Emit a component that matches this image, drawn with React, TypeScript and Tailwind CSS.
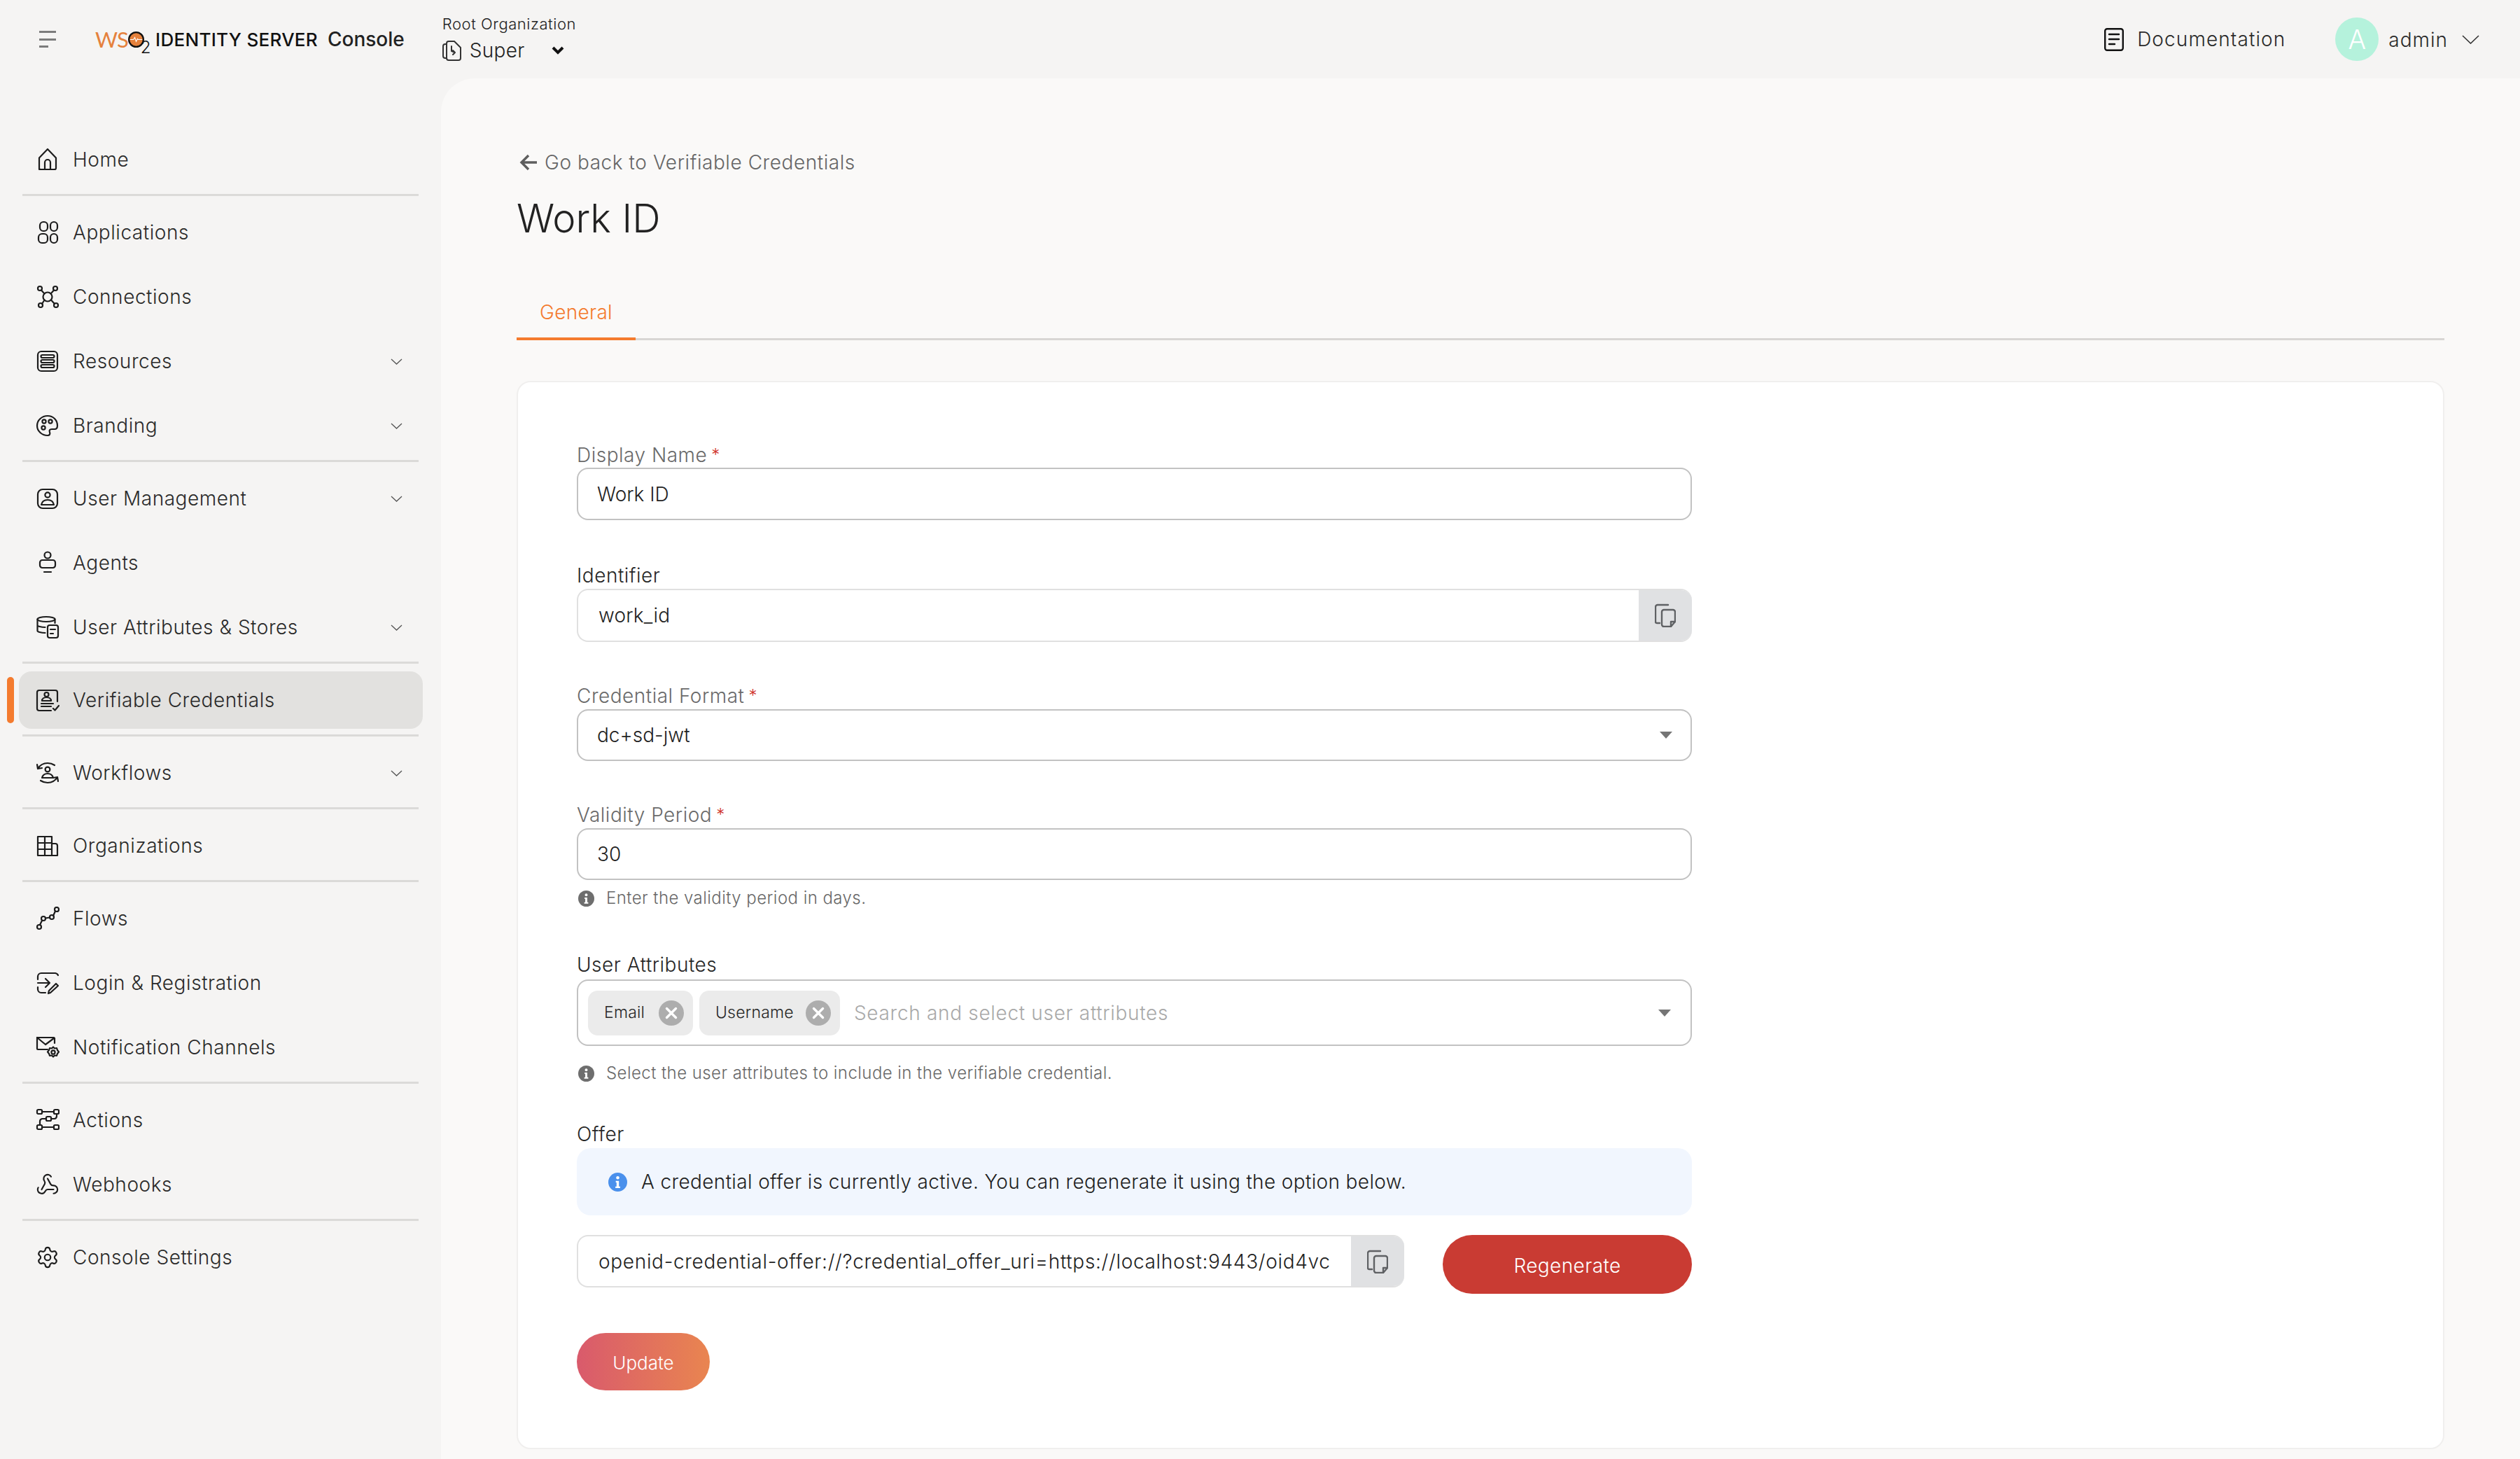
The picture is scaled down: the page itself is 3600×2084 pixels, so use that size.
import React from "react";
import { Webhook, Settings } from "lucide-react";

const S = "#1c1c1c";
type P = { children: React.ReactNode };
const Ic = ({ children }: P) => (
  <svg width="34" height="34" viewBox="0 0 34 34" fill="none" stroke={S} strokeWidth="2.2" strokeLinecap="round" strokeLinejoin="round" className="shrink-0">
    {children}
  </svg>
);
const Home = () => (
  <Ic>
    <path d="M5 31V14.5L17 2l12 12.5V29a2 2 0 0 1-2 2H7a2 2 0 0 1-2-2z" />
    <path d="M13 31V21a4 4 0 0 1 8 0v10" />
  </Ic>
);
const Apps = () => (
  <Ic>
    <rect x="6" y="2" width="11" height="13" rx="5" />
    <rect x="21" y="2" width="10" height="13" rx="5" />
    <rect x="4" y="19" width="13" height="13" rx="5" />
    <rect x="21" y="19" width="10" height="13" rx="5" />
  </Ic>
);
const Conn = () => (
  <Ic>
    <circle cx="6" cy="5" r="3" />
    <circle cx="28" cy="5" r="3" />
    <circle cx="7" cy="29" r="3" />
    <circle cx="29" cy="29" r="3" />
    <circle cx="17" cy="17" r="6.5" />
    <path d="M8 7.5l4.5 5M26 7.5l-4.5 5M9 27l3.5-5.5M27 27l-5-5.5" />
  </Ic>
);
const Res = () => (
  <Ic>
    <rect x="3" y="3" width="28" height="28" rx="5" />
    <rect x="7.5" y="8" width="19" height="4" rx="2" />
    <rect x="7.5" y="15" width="19" height="4" rx="2" />
    <rect x="7.5" y="22" width="19" height="4" rx="2" />
  </Ic>
);
const Brand = () => (
  <Ic>
    <path d="M31 17c0-8-6-14-14-14S2 9 2 17s7 14 15 14c3 0 4-2 3-4.5-1-3 0-4.5 3-4.5h4c3 0 4-2 4-5z" />
    <circle cx="12" cy="11" r="2.6" />
    <circle cx="21" cy="11" r="2.6" />
    <circle cx="11" cy="20" r="2.6" />
  </Ic>
);
const User = () => (
  <Ic>
    <rect x="3" y="4" width="28" height="27" rx="7" />
    <circle cx="17" cy="12" r="3.6" />
    <path d="M8 26c1-5 5-7 9-7s8 2 9 7z" />
  </Ic>
);
const Agent = () => (
  <Ic>
    <circle cx="17" cy="6" r="4.5" />
    <rect x="6" y="13" width="22" height="11" rx="3.5" />
    <path d="M12 30h10" />
  </Ic>
);
const Stores = () => (
  <Ic>
    <ellipse cx="15" cy="5.5" rx="12.5" ry="3.5" />
    <path d="M2.5 5.5V22c0 1.5 5 3 11 3M2.5 14c0 1.5 5 3 11 3M27.5 5.5V11" />
    <rect x="17" y="14" width="15" height="18" rx="3" />
    <path d="M21 20h7M21 26h4" />
  </Ic>
);
const Vc = () => (
  <Ic>
    <path d="M31 19V6a3 3 0 0 0-3-3H5a3 3 0 0 0-3 3v23a3 3 0 0 0 3 3h17" />
    <circle cx="15.5" cy="9" r="3" />
    <path d="M9 18c0-3 3-5 6.500-5s6.500 2 6.500 5zM8 22h17M8 26h14" />
    <path d="M25 29l2.500 2.500L33 25" />
  </Ic>
);
const Wf = () => (
  <Ic>
    <circle cx="17" cy="12" r="3.400" />
    <path d="M9 24c1-4 4-6 8-6s7 2 8 6z" />
    <path d="M3 11c3-5 8-8 14-8 4 0 7 1 10 3M2 5l1 6 6-1M31 23c-3 5-8 8-14 8-4 0-7-1-10-3M32 29l-1-6-6 1" />
  </Ic>
);
const Org = () => (
  <Ic>
    <path d="M3 4h20v27H3zM3 13h20M3 22h20M13 4v27M23 14h5a3 3 0 0 1 3 3v14H23" />
  </Ic>
);
const Flows = () => (
  <Ic>
    <circle cx="5" cy="29" r="3" />
    <circle cx="11" cy="17" r="3" />
    <circle cx="23" cy="15" r="3" />
    <circle cx="30" cy="4" r="3" />
    <path d="M6 26l3-6M14 16.500l6-1M25 13l3-6.500" />
  </Ic>
);
const Login = () => (
  <Ic>
    <path d="M3 12V8a5 5 0 0 1 5-5h20a5 5 0 0 1 4 3M3 23v3a5 5 0 0 0 5 5h6" />
    <path d="M3 17h17M14 11l6 6-6 6" />
    <path d="M21 31l-3 1 1-4 10-10 3 3z" />
  </Ic>
);
const Notif = () => (
  <Ic>
    <path d="M17 20H3a1 1 0 0 1-1-1V3h24l1 1v7" />
    <path d="M2 3l12 10L26 4" />
    <circle cx="25" cy="24" r="2.600" />
    <path d="M25 16.500l2 2 3-.500 1 3 2 2.500-2 2.500-1 3-3-.500-2 2-2-2-3 .500-1-3-2-2.500 2-2.500 1-3 3 .500z" />
  </Ic>
);
const Act = () => (
  <Ic>
    <rect x="2" y="2" width="7" height="6" rx="1.500" />
    <rect x="26" y="2" width="7" height="6" rx="1.500" />
    <rect x="15" y="12" width="7" height="6" rx="1.500" />
    <rect x="2" y="24" width="7" height="6" rx="1.500" />
    <rect x="26" y="24" width="7" height="6" rx="1.500" />
    <path d="M9 5h17M9 27h17M22 15h5a4 4 0 0 0 3-4V8M15 15h-6a4 4 0 0 0-3 4v5" />
  </Ic>
);
const Hook = () => <Webhook size={34} strokeWidth={1.5} color={S} className="shrink-0" />;
const Gear = () => <Settings size={34} strokeWidth={1.5} color={S} className="shrink-0" />;

const Chev = () => (
  <svg width="17" height="9" viewBox="0 0 17 9" fill="none" stroke="#555" strokeWidth="1.300" className="shrink-0">
    <path d="M1 1l7.500 7L16 1" />
  </svg>
);

const Item = ({ icon, label, chevron, active }: { icon: React.ReactNode; label: string; chevron?: boolean; active?: boolean }) => (
  <div className={active ? "relative flex h-[82px] items-center rounded-[18px] bg-[#e2e1df] pl-[24px] pr-[29px]" : "relative flex h-[82px] items-center pl-[24px] pr-[29px]"}>
    {active && <span className="absolute left-[-17px] top-[8px] h-[66px] w-[10px] rounded-full bg-[#f47b2e]" />}
    {icon}
    <span className="ml-[19px] flex-1 text-[28px] tracking-[0.55px] text-[#2a2a2a]">{label}</span>
    {chevron && <Chev />}
  </div>
);
const Group = ({ children }: P) => <div className="flex flex-col gap-[10px]">{children}</div>;
const Div = () => <div className="mb-[11px] ml-[5px] mr-[6px] mt-[8px] h-[3px] bg-[#dbdad8]" />;

const Star = () => <span className="ml-[6px] text-[24px] text-[#d0342c]">*</span>;
const Label = ({ text, req, mt }: { text: string; req?: boolean; mt: string }) => (
  <div className={`${mt} flex h-[36px] items-center text-[28px] tracking-[0.5px] ${req ? "text-[#6a6a6a]" : "text-[#262626]"}`}>
    {text}
    {req && <Star />}
  </div>
);
const Caret = () => (
  <svg width="18" height="10" viewBox="0 0 18 10" className="shrink-0">
    <path d="M0 0h18l-9 10z" fill="#757575" />
  </svg>
);
const Copy = () => (
  <svg width="30" height="34" viewBox="0 0 30 34" fill="none" stroke="#5f6164" strokeWidth="2.400" strokeLinejoin="round" strokeLinecap="round">
    <path d="M19 2H4a3 3 0 0 0-3 3v21a2 2 0 0 0 2 2h4" />
    <path d="M10 12a3 3 0 0 1 3-3h13a3 3 0 0 1 3 3v14l-6 7H13a3 3 0 0 1-3-3z" />
    <path d="M23 33v-7h6" />
  </svg>
);
const Info = ({ bg, size }: { bg: string; size: string }) => (
  <svg viewBox="0 0 24 24" className={`${size} shrink-0`}>
    <circle cx="12" cy="12" r="12" fill={bg} />
    <circle cx="12" cy="6.500" r="2" fill="#fff" />
    <path d="M9.500 10.500h4v7h1.500v2H9v-2h1.500v-5h-1z" fill="#fff" />
  </svg>
);
const Hint = ({ text, mt }: { text: string; mt: string }) => (
  <div className={`${mt} flex h-[32px] items-center pl-[2px] text-[24px] tracking-[0.44px] text-[#686868]`}>
    <Info bg="#6e6e6e" size="h-[23px] w-[23px]" />
    <span className="ml-[17px]">{text}</span>
  </div>
);
const Chip = ({ text, w }: { text: string; w: string }) => (
  <div className={`${w} flex h-[64px] items-center justify-between rounded-[14px] bg-[#ebebeb] pl-[23px] pr-[13px] text-[23px] tracking-[0.2px] text-[#262626]`}>
    {text}
    <svg viewBox="0 0 36 36" className="h-[36px] w-[36px]">
      <circle cx="18" cy="18" r="18" fill="#adadad" />
      <path d="M11.500 11.500l13 13M24.500 11.500l-13 13" stroke="#fff" strokeWidth="3.400" strokeLinecap="round" />
    </svg>
  </div>
);

export default function App() {
  return (
    <div className="flex h-[2084px] w-[3600px] flex-col overflow-hidden bg-[#f5f4f3] font-['Inter','Liberation_Sans',sans-serif] font-[350] text-[#222]">
      <header className="flex h-[112px] shrink-0 items-center pl-[56px] pr-[58px]">
        <div className="flex h-[24px] w-[24px] flex-col justify-between">
          <span className="h-[3px] w-[24px] bg-[#7c7c7c]" />
          <span className="h-[3px] w-[24px] bg-[#7c7c7c]" />
          <span className="h-[3px] w-[13px] bg-[#7c7c7c]" />
        </div>
        <div className="ml-[56px] flex h-[40px] w-[75px] shrink-0 items-center">
          <span className="font-['Lato',sans-serif] text-[31px] font-normal leading-none tracking-[-1px] text-[#e5813c]">WS</span>
          <svg viewBox="0 0 24 24" className="h-[23px] w-[23px] shrink-0">
            <circle cx="12" cy="12" r="10.800" fill="#e5813c" stroke="#111" strokeWidth="2.400" />
            <path d="M3 12h5l2-3 2 6 2-4 1 1h6" fill="none" stroke="#fff" strokeWidth="1.200" />
          </svg>
          <span className="ml-[-5px] mt-[24px] text-[24px] font-light leading-none text-[#111]">2</span>
        </div>
        <span className="ml-[11px] text-[26px] font-medium tracking-[0.3px] text-[#111]">IDENTITY SERVER</span>
        <span className="ml-[14px] text-[28px] font-medium text-[#222]">Console</span>
        <div className="ml-[54px] flex flex-col">
          <span className="mt-[-2px] text-[22px] leading-[28px] tracking-[0.55px] text-[#222]">Root Organization</span>
          <div className="mt-[6px] flex items-center">
            <svg width="28" height="30" viewBox="0 0 28 30" fill="none" stroke="#333" strokeWidth="2" strokeLinecap="round" strokeLinejoin="round">
              <path d="M6 6H4a3 3 0 0 0-3 3v14a3 3 0 0 0 3 3h2" />
              <path d="M6 5a3 3 0 0 1 3-3h8l9 9v15a3 3 0 0 1-3 3H9a3 3 0 0 1-3-3z" />
              <path d="M13 9v7l5 2-3-3M15 21l3-3" />
            </svg>
            <span className="ml-[11px] text-[28px] leading-[36px] tracking-[0.3px] text-[#222]">Super</span>
            <svg width="18" height="12" viewBox="0 0 18 12" fill="none" stroke="#111" strokeWidth="4" className="ml-[38px]">
              <path d="M2 2l7 7 7-7" />
            </svg>
          </div>
        </div>
        <div className="ml-auto flex items-center">
          <svg width="28" height="33" viewBox="0 0 28 33" fill="none" stroke="#111" strokeWidth="2.400" strokeLinecap="round">
            <rect x="1.200" y="1.200" width="25.600" height="30.600" rx="3" />
            <path d="M7 9h14M7 16h14M7 23h8" />
          </svg>
          <span className="ml-[19px] text-[28px] tracking-[1.1px] text-[#2a2a2a]">Documentation</span>
          <div className="ml-[71px] flex h-[62px] w-[62px] items-center justify-center rounded-full bg-[#b5f2dc] text-[38px] font-light text-white">A</div>
          <span className="ml-[14px] pt-[2px] text-[28px] tracking-[1px] text-[#2a2a2a]">admin</span>
          <svg width="25" height="13" viewBox="0 0 25 13" fill="none" stroke="#333" strokeWidth="1.600" className="ml-[20px]">
            <path d="M1 1l11.500 11L24 1" />
          </svg>
        </div>
      </header>
      <div className="flex min-h-0 flex-1">
        <aside className="w-[630px] shrink-0 pl-[27px] pr-[26px] pt-[75px]">
          <Group>
            <Item icon={<Home />} label="Home" />
          </Group>
          <Div />
          <Group>
            <Item icon={<Apps />} label="Applications" />
            <Item icon={<Conn />} label="Connections" />
            <Item icon={<Res />} label="Resources" chevron />
            <Item icon={<Brand />} label="Branding" chevron />
          </Group>
          <Div />
          <Group>
            <Item icon={<User />} label="User Management" chevron />
            <Item icon={<Agent />} label="Agents" />
            <Item icon={<Stores />} label="User Attributes & Stores" chevron />
          </Group>
          <Div />
          <Group>
            <Item icon={<Vc />} label="Verifiable Credentials" active />
          </Group>
          <Div />
          <Group>
            <Item icon={<Wf />} label="Workflows" chevron />
          </Group>
          <Div />
          <Group>
            <Item icon={<Org />} label="Organizations" />
          </Group>
          <Div />
          <Group>
            <Item icon={<Flows />} label="Flows" />
            <Item icon={<Login />} label="Login & Registration" />
            <Item icon={<Notif />} label="Notification Channels" />
          </Group>
          <Div />
          <Group>
            <Item icon={<Act />} label="Actions" />
            <Item icon={<Hook />} label="Webhooks" />
          </Group>
          <Div />
          <Group>
            <Item icon={<Gear />} label="Console Settings" />
          </Group>
        </aside>
        <main className="min-w-0 flex-1 rounded-tl-[48px] bg-[#faf9f8] pl-[108px] pr-[108px] pt-[102px]">
          <div className="flex h-[36px] items-center pl-[4px] text-[28px] tracking-[0.56px] text-[#666]">
            <svg width="26" height="24" viewBox="0 0 26 24" fill="none" stroke="#5e5e5e" strokeWidth="3.400">
              <path d="M25 12H3M13 2L3 12l10 10" />
            </svg>
            <span className="ml-[10px]">Go back to Verifiable Credentials</span>
          </div>
          <h1 className="mt-[28px] h-[68px] text-[56px] font-light leading-[68px] text-[#222]">Work ID</h1>
          <div className="mt-[82px] h-[58px] border-b-[3px] border-[#d8d6d4]">
            <div className="flex h-[58px] w-[170px] items-start justify-center border-b-[4px] border-[#f47b2e] text-[28px] leading-[36px] tracking-[0.3px] text-[#f47b2e]">General</div>
          </div>
          <section className="mt-[58px] h-[1526px] rounded-[20px] border-2 border-[#f0efee] bg-white pl-[84px] pt-[86px]">
            <div className="w-[1593px]">
              <Label text="Display Name" req mt="mt-0" />
              <div className="flex h-[75px] items-center rounded-[16px] border-2 border-[#c2c2c2] pl-[27px] text-[28px] text-[#222]">Work ID</div>

              <Label text="Identifier" mt="mt-[61px]" />
              <div className="mt-px flex h-[76px] overflow-hidden rounded-[16px] border-2 border-r-0 border-[#e0e0e0]">
                <div className="flex flex-1 items-center pl-[29px] text-[28px] tracking-[0.2px] text-[#222]">work_id</div>
                <div className="flex w-[76px] items-center justify-center bg-[#e0e1e3]">
                  <Copy />
                </div>
              </div>

              <Label text="Credential Format" req mt="mt-[59px]" />
              <div className="mt-px flex h-[74px] items-center justify-between rounded-[16px] border-2 border-[#c2c2c2] pl-[27px] pr-[26px] text-[28px] text-[#222]">
                dc+sd-jwt
                <Caret />
              </div>

              <Label text="Validity Period" req mt="mt-[59px]" />
              <div className="mt-px flex h-[74px] items-center rounded-[16px] border-2 border-[#c2c2c2] pl-[27px] text-[28px] text-[#222]">30</div>
              <Hint text="Enter the validity period in days." mt="mt-[10px]" />

              <Label text="User Attributes" mt="mt-[61px]" />
              <div className="mt-[3px] flex h-[95px] items-center gap-[9px] rounded-[16px] border-2 border-[#c2c2c2] pl-[14px] pr-[28px]">
                <Chip text="Email" w="w-[150px]" />
                <Chip text="Username" w="w-[201px]" />
                <span className="ml-[11px] flex-1 text-[28px] tracking-[0.68px] text-[#a9a9a9]">Search and select user attributes</span>
                <Caret />
              </div>
              <Hint text="Select the user attributes to include in the verifiable credential." mt="mt-[23px]" />

              <Label text="Offer" mt="mt-[53px]" />
              <div className="mt-[2px] flex h-[96px] items-center rounded-[20px] bg-[#f1f6fe] pl-[45px] text-[28px] tracking-[0.36px] text-[#1f1f1f]">
                <Info bg="#4a90ec" size="h-[27px] w-[27px]" />
                <span className="ml-[20px]">A credential offer is currently active. You can regenerate it using the option below.</span>
              </div>

              <div className="mt-[28px] flex items-start">
                <div className="flex h-[75px] w-[1182px] overflow-hidden rounded-[16px] border-2 border-r-0 border-[#e0e0e0]">
                  <div className="ml-[29px] mr-[24px] flex flex-1 items-center whitespace-nowrap text-[28px] tracking-[0.68px] text-[#222]">openid-credential-offer://?credential_offer_uri=https://localhost:9443/oid4vc</div>
                  <div className="flex w-[76px] shrink-0 items-center justify-center bg-[#e0e1e3]">
                    <Copy />
                  </div>
                </div>
                <div className="ml-[55px] flex h-[84px] w-[356px] items-center justify-center rounded-full bg-[#c93b33] pt-[3px] text-[28px] tracking-[0.4px] text-white">Regenerate</div>
              </div>

              <div className="mt-[56px] flex h-[82px] w-[190px] items-center justify-center rounded-full bg-[linear-gradient(90deg,#d95a6c,#e98550)] pt-[2px] text-[26px] text-white">Update</div>
            </div>
          </section>
        </main>
      </div>
    </div>
  );
}
